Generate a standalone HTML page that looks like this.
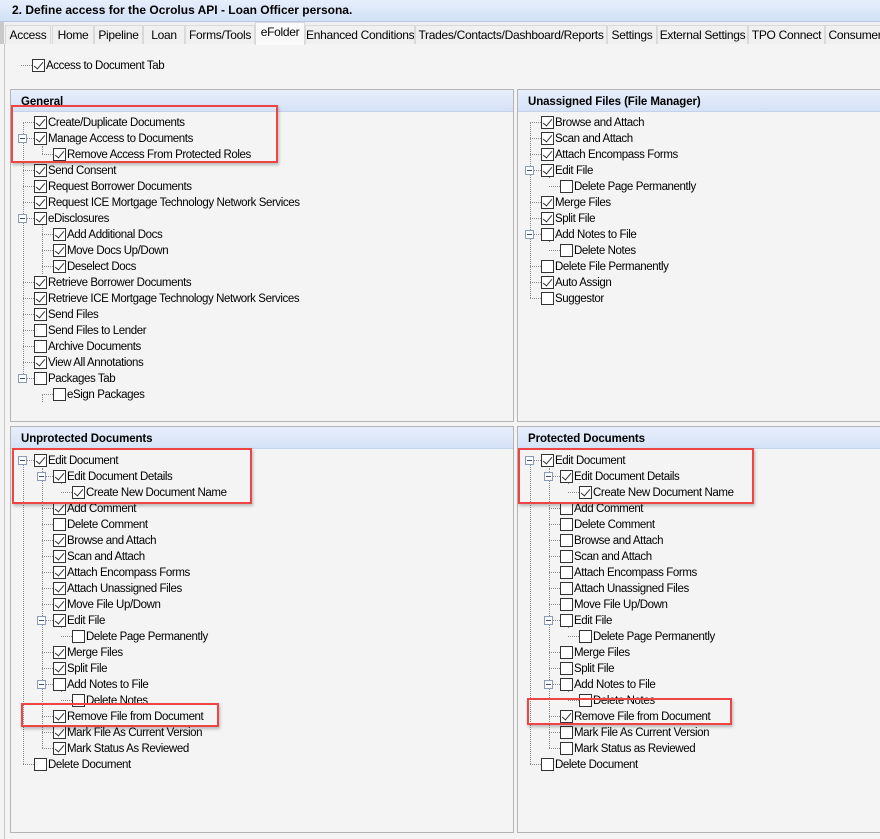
<!DOCTYPE html>
<html><head><meta charset="utf-8">
<style>
*{box-sizing:border-box;margin:0;padding:0}
body{width:880px;height:839px;overflow:hidden;background:#f4f4f4;font-family:"Liberation Sans",Arial,sans-serif;font-size:11.5px;color:#000;position:relative;letter-spacing:-0.4px}
.title{position:absolute;left:0;top:0;width:880px;height:22px;background:linear-gradient(#e6eefb,#d2e0f6);border-bottom:1px solid #b8c8e0;font-weight:bold;font-size:12px;line-height:20px;padding-left:12px;letter-spacing:0}
.tabs{position:absolute;left:0;top:22px;width:880px;height:22px;background:#f0f0f0;border-left:4px solid #c9c9c9}
.tab{position:absolute;top:3px;height:19px;background:#f0f0f0;border:1px solid #d9d9d9;border-bottom:none;line-height:18px;font-size:12px;letter-spacing:-0.3px;text-align:center;white-space:nowrap;overflow:hidden}
.tab.sel{top:0;height:23px;background:#fafafa;border-color:#d9d9d9;line-height:19px;z-index:2}
.outer{position:absolute;left:4px;top:44px;width:876px;height:795px;border-left:1px solid #c6c6c6}
.panel{position:absolute;border:1px solid #b4b4b4;background:#f4f4f4}
.ph{height:22px;background:linear-gradient(#e8effb,#d5e2f7);border-bottom:1px solid #c4d2ea;font-weight:bold;font-size:11.5px;line-height:24px;padding-left:10px;letter-spacing:-0.1px}
.rows{position:relative}
.r{position:relative;height:16px;line-height:18px;white-space:nowrap}
.r::before{content:"";position:absolute;top:8px;width:11px;border-top:1px dotted #888}
.r i{position:absolute;top:2px;width:13px;height:13px;border:1px solid #333;background:#fff}
.r i.c::after{content:"";position:absolute;left:3px;top:0px;width:4px;height:8px;border:solid #333;border-width:0 1.5px 1.5px 0;transform:rotate(40deg)}
.r b{position:absolute;top:4px;width:9px;height:9px;border:1px solid #8a9cb8;background:#fff;z-index:1}
.r b::after{content:"";position:absolute;left:1px;top:3px;width:5px;border-top:1px solid #405070}
.l0 i{left:23px}.l0{padding-left:37px}.l0::before{left:12px}.l0 b{left:7px}
.l1 i{left:42px}.l1{padding-left:56px}.l1::before{left:31px}.l1 b{left:26px}
.l2 i{left:61px}.l2{padding-left:75px}.l2::before{left:50px}
.v{position:absolute;border-left:1px dotted #888;width:0}
.red{position:absolute;border:2px solid #ee4444;box-shadow:1px 2px 3px rgba(0,0,0,.25);z-index:5}
</style></head><body>
<div class="title">2. Define access for the Ocrolus API - Loan Officer persona.</div>
<div class="tabs">
<div class="tab" style="left:1px;width:46px">Access</div>
<div class="tab" style="left:48px;width:42px">Home</div>
<div class="tab" style="left:90px;width:49px">Pipeline</div>
<div class="tab" style="left:139px;width:42px">Loan</div>
<div class="tab" style="left:181px;width:70px">Forms/Tools</div>
<div class="tab sel" style="left:251px;width:50px">eFolder</div>
<div class="tab" style="left:301px;width:110px">Enhanced Conditions</div>
<div class="tab" style="left:411px;width:192px">Trades/Contacts/Dashboard/Reports</div>
<div class="tab" style="left:603px;width:50px">Settings</div>
<div class="tab" style="left:653px;width:91px">External Settings</div>
<div class="tab" style="left:744px;width:77px">TPO Connect</div>
<div class="tab" style="left:821px;width:60px">Consumer</div>
</div>
<div class="outer"></div>

<div class="rows" style="position:absolute;left:9px;top:57px;width:200px">
<div class="r l0"><i class="c"></i>Access to Document Tab</div>
</div>

<!-- General -->
<div class="panel" style="left:10px;top:89px;width:504px;height:333px">
<div class="ph">General</div>
<div class="rows" style="top:2px">
<div class="v" style="left:12px;top:8px;height:256px"></div>
<div class="v" style="left:31px;top:32px;height:8px"></div>
<div class="v" style="left:31px;top:104px;height:56px"></div>
<div class="v" style="left:31px;top:280px;height:8px"></div>
<div class="r l0"><i class="c"></i>Create/Duplicate Documents</div>
<div class="r l0"><b></b><i class="c"></i>Manage Access to Documents</div>
<div class="r l1"><i class="c"></i>Remove Access From Protected Roles</div>
<div class="r l0"><i class="c"></i>Send Consent</div>
<div class="r l0"><i class="c"></i>Request Borrower Documents</div>
<div class="r l0"><i class="c"></i>Request ICE Mortgage Technology Network Services</div>
<div class="r l0"><b></b><i class="c"></i>eDisclosures</div>
<div class="r l1"><i class="c"></i>Add Additional Docs</div>
<div class="r l1"><i class="c"></i>Move Docs Up/Down</div>
<div class="r l1"><i class="c"></i>Deselect Docs</div>
<div class="r l0"><i class="c"></i>Retrieve Borrower Documents</div>
<div class="r l0"><i class="c"></i>Retrieve ICE Mortgage Technology Network Services</div>
<div class="r l0"><i class="c"></i>Send Files</div>
<div class="r l0"><i></i>Send Files to Lender</div>
<div class="r l0"><i></i>Archive Documents</div>
<div class="r l0"><i class="c"></i>View All Annotations</div>
<div class="r l0"><b></b><i></i>Packages Tab</div>
<div class="r l1"><i></i>eSign Packages</div>
</div></div>

<!-- Unassigned -->
<div class="panel" style="left:517px;top:89px;width:364px;height:333px">
<div class="ph">Unassigned Files (File Manager)</div>
<div class="rows" style="top:2px">
<div class="v" style="left:12px;top:8px;height:176px"></div>
<div class="v" style="left:31px;top:56px;height:8px"></div>
<div class="v" style="left:31px;top:120px;height:8px"></div>
<div class="r l0"><i class="c"></i>Browse and Attach</div>
<div class="r l0"><i class="c"></i>Scan and Attach</div>
<div class="r l0"><i class="c"></i>Attach Encompass Forms</div>
<div class="r l0"><b></b><i class="c"></i>Edit File</div>
<div class="r l1"><i></i>Delete Page Permanently</div>
<div class="r l0"><i class="c"></i>Merge Files</div>
<div class="r l0"><i class="c"></i>Split File</div>
<div class="r l0"><b></b><i></i>Add Notes to File</div>
<div class="r l1"><i></i>Delete Notes</div>
<div class="r l0"><i></i>Delete File Permanently</div>
<div class="r l0"><i class="c"></i>Auto Assign</div>
<div class="r l0"><i></i>Suggestor</div>
</div></div>

<!-- Unprotected -->
<div class="panel" style="left:10px;top:426px;width:504px;height:407px">
<div class="ph">Unprotected Documents</div>
<div class="rows" style="top:3px">
<div class="v" style="left:12px;top:8px;height:304px"></div>
<div class="v" style="left:31px;top:16px;height:280px"></div>
<div class="v" style="left:50px;top:24px;height:8px"></div>
<div class="v" style="left:50px;top:168px;height:8px"></div>
<div class="v" style="left:50px;top:232px;height:8px"></div>
<div class="r l0"><b></b><i class="c"></i>Edit Document</div>
<div class="r l1"><b></b><i class="c"></i>Edit Document Details</div>
<div class="r l2"><i class="c"></i>Create New Document Name</div>
<div class="r l1"><i class="c"></i>Add Comment</div>
<div class="r l1"><i></i>Delete Comment</div>
<div class="r l1"><i class="c"></i>Browse and Attach</div>
<div class="r l1"><i class="c"></i>Scan and Attach</div>
<div class="r l1"><i class="c"></i>Attach Encompass Forms</div>
<div class="r l1"><i class="c"></i>Attach Unassigned Files</div>
<div class="r l1"><i class="c"></i>Move File Up/Down</div>
<div class="r l1"><b></b><i class="c"></i>Edit File</div>
<div class="r l2"><i></i>Delete Page Permanently</div>
<div class="r l1"><i class="c"></i>Merge Files</div>
<div class="r l1"><i class="c"></i>Split File</div>
<div class="r l1"><b></b><i></i>Add Notes to File</div>
<div class="r l2"><i></i>Delete Notes</div>
<div class="r l1"><i class="c"></i>Remove File from Document</div>
<div class="r l1"><i class="c"></i>Mark File As Current Version</div>
<div class="r l1"><i class="c"></i>Mark Status As Reviewed</div>
<div class="r l0"><i></i>Delete Document</div>
</div></div>

<!-- Protected -->
<div class="panel" style="left:517px;top:426px;width:364px;height:407px">
<div class="ph">Protected Documents</div>
<div class="rows" style="top:3px">
<div class="v" style="left:12px;top:8px;height:304px"></div>
<div class="v" style="left:31px;top:16px;height:280px"></div>
<div class="v" style="left:50px;top:24px;height:8px"></div>
<div class="v" style="left:50px;top:168px;height:8px"></div>
<div class="v" style="left:50px;top:232px;height:8px"></div>
<div class="r l0"><b></b><i class="c"></i>Edit Document</div>
<div class="r l1"><b></b><i class="c"></i>Edit Document Details</div>
<div class="r l2"><i class="c"></i>Create New Document Name</div>
<div class="r l1"><i></i>Add Comment</div>
<div class="r l1"><i></i>Delete Comment</div>
<div class="r l1"><i></i>Browse and Attach</div>
<div class="r l1"><i></i>Scan and Attach</div>
<div class="r l1"><i></i>Attach Encompass Forms</div>
<div class="r l1"><i></i>Attach Unassigned Files</div>
<div class="r l1"><i></i>Move File Up/Down</div>
<div class="r l1"><b></b><i></i>Edit File</div>
<div class="r l2"><i></i>Delete Page Permanently</div>
<div class="r l1"><i></i>Merge Files</div>
<div class="r l1"><i></i>Split File</div>
<div class="r l1"><b></b><i></i>Add Notes to File</div>
<div class="r l2"><i></i>Delete Notes</div>
<div class="r l1"><i class="c"></i>Remove File from Document</div>
<div class="r l1"><i></i>Mark File As Current Version</div>
<div class="r l1"><i></i>Mark Status as Reviewed</div>
<div class="r l0"><i></i>Delete Document</div>
</div></div>

<div class="red" style="left:11px;top:105px;width:267px;height:58px"></div>
<div class="red" style="left:12px;top:448px;width:240px;height:56px"></div>
<div class="red" style="left:21px;top:703px;width:198px;height:24px"></div>
<div class="red" style="left:518px;top:448px;width:236px;height:56px"></div>
<div class="red" style="left:527px;top:698px;width:205px;height:27px"></div>
</body></html>
